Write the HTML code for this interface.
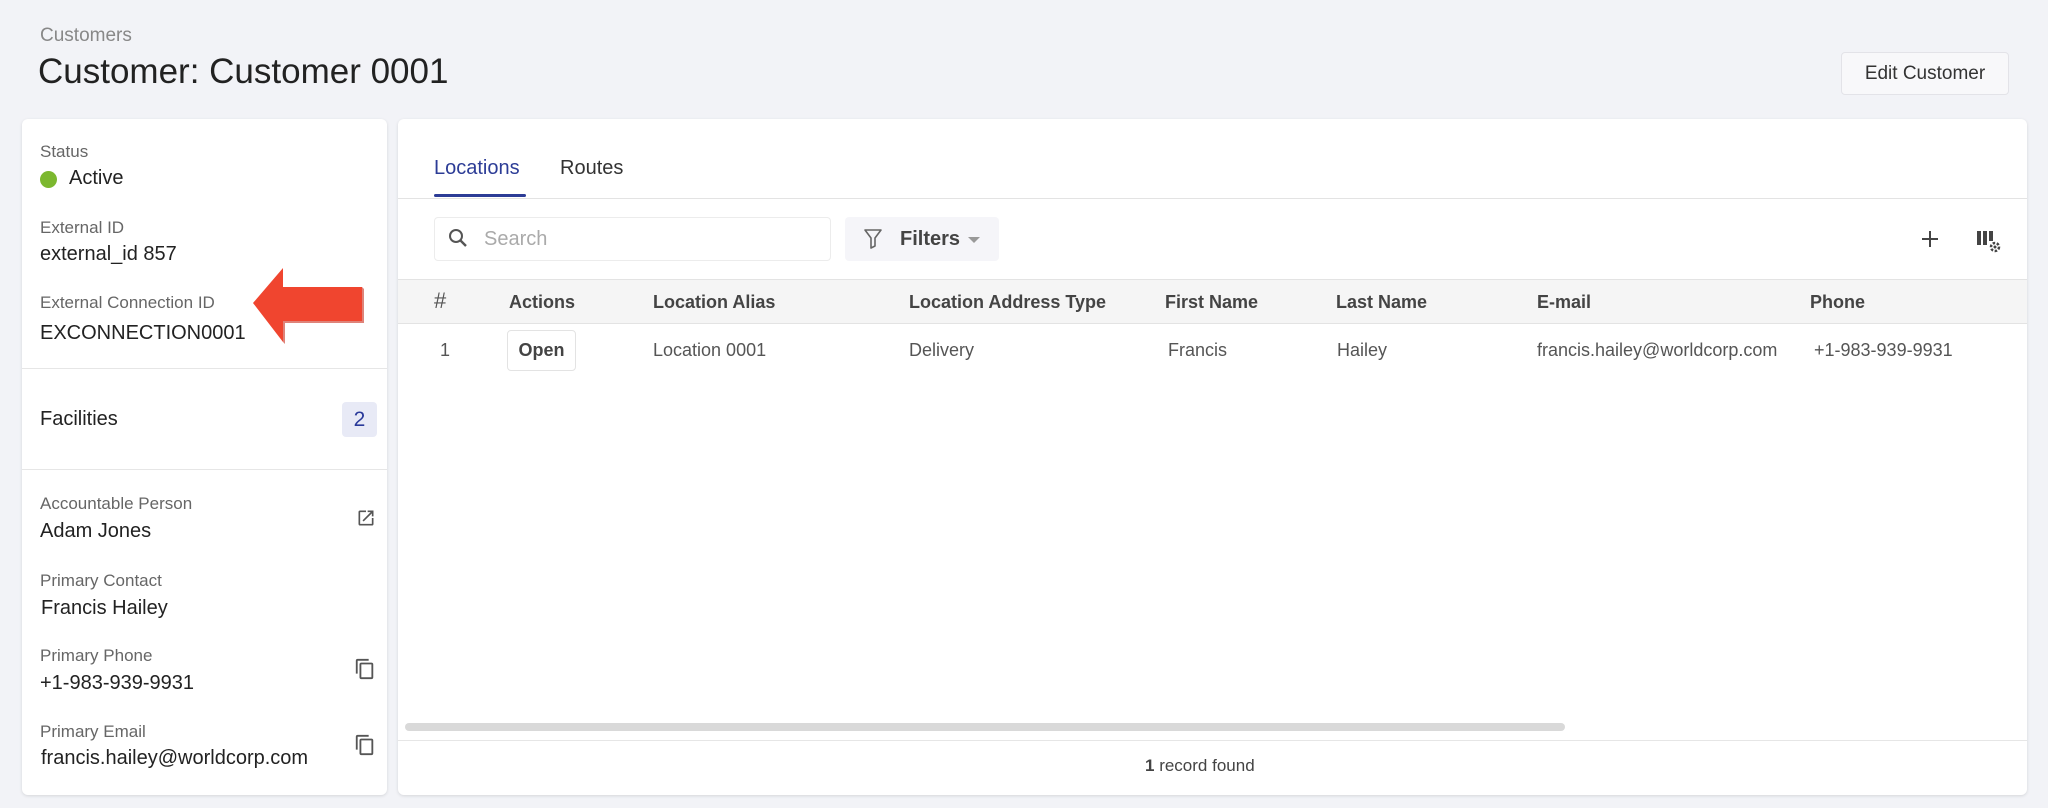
<!DOCTYPE html>
<html><head><meta charset="utf-8"><style>
*{box-sizing:border-box;margin:0;padding:0}
body{width:2048px;height:808px;background:#f2f3f7;font-family:"Liberation Sans",Arial,sans-serif;color:#222;position:relative;overflow:hidden}
.a{position:absolute;white-space:nowrap}
.card{position:absolute;background:#fff;border-radius:6px;box-shadow:0 1px 3px rgba(0,0,0,.12)}
.lbl{font-size:17px;color:#666}
.val{font-size:20px;color:#222}
.th{font-size:18px;color:#444;font-weight:bold;top:292px}
.td{font-size:18px;color:#555;top:340px}
</style></head><body>
<div class="a" style="left:40px;top:25px;font-size:19px;color:#888">Customers</div>
<div class="a" style="left:38px;top:52px;font-size:35px;color:#222">Customer: Customer 0001</div>
<div class="a" style="left:1841px;top:52px;width:168px;height:43px;background:#f8f8fa;border:1px solid #e3e3e8;border-radius:4px;font-size:19px;line-height:41px;text-align:center;color:#333">Edit Customer</div>

<div class="card" style="left:22px;top:119px;width:365px;height:676px"></div>
<div class="a lbl" style="left:40px;top:142px">Status</div>
<div class="a" style="left:40px;top:171px;width:17px;height:17px;border-radius:50%;background:#7cb82f"></div>
<div class="a val" style="left:69px;top:167px">Active</div>
<div class="a lbl" style="left:40px;top:218px">External ID</div>
<div class="a val" style="left:40px;top:243px">external_id 857</div>
<div class="a lbl" style="left:40px;top:293px">External Connection ID</div>
<div class="a val" style="left:40px;top:322px">EXCONNECTION0001</div>
<div class="a" style="left:22px;top:368px;width:365px;height:1px;background:#e6e6e6"></div>
<div class="a val" style="left:40px;top:408px">Facilities</div>
<div class="a" style="left:342px;top:402px;width:35px;height:35px;background:#e8eaf6;border-radius:4px;color:#2a3a9a;font-size:21px;line-height:35px;text-align:center">2</div>
<div class="a" style="left:22px;top:469px;width:365px;height:1px;background:#e6e6e6"></div>
<div class="a lbl" style="left:40px;top:494px">Accountable Person</div>
<div class="a val" style="left:40px;top:520px">Adam Jones</div>
<svg class="a" style="left:356px;top:508px" width="20" height="20" viewBox="0 0 24 24"><path d="M19 19H5V5h7V3H5a2 2 0 0 0-2 2v14a2 2 0 0 0 2 2h14a2 2 0 0 0 2-2v-7h-2v7zM14 3v2h3.6l-9.8 9.8 1.4 1.4L19 6.4V10h2V3h-7z" fill="#555"/></svg>
<div class="a lbl" style="left:40px;top:571px">Primary Contact</div>
<div class="a val" style="left:41px;top:597px">Francis Hailey</div>
<div class="a lbl" style="left:40px;top:646px">Primary Phone</div>
<div class="a val" style="left:40px;top:672px">+1-983-939-9931</div>
<svg class="a" style="left:354px;top:658px" width="22" height="22" viewBox="0 0 24 24"><path d="M16 1H4a2 2 0 0 0-2 2v14h2V3h12V1zm3 4H8a2 2 0 0 0-2 2v14a2 2 0 0 0 2 2h11a2 2 0 0 0 2-2V7a2 2 0 0 0-2-2zm0 16H8V7h11v14z" fill="#555"/></svg>
<div class="a lbl" style="left:40px;top:722px">Primary Email</div>
<div class="a val" style="left:41px;top:747px">francis.hailey@worldcorp.com</div>
<svg class="a" style="left:354px;top:734px" width="22" height="22" viewBox="0 0 24 24"><path d="M16 1H4a2 2 0 0 0-2 2v14h2V3h12V1zm3 4H8a2 2 0 0 0-2 2v14a2 2 0 0 0 2 2h11a2 2 0 0 0 2-2V7a2 2 0 0 0-2-2zm0 16H8V7h11v14z" fill="#555"/></svg>

<svg class="a" style="left:250px;top:266px" width="115" height="80" viewBox="0 0 115 80"><polygon points="3,37 33,2 33,21 112,21 112,55 33,55 33,76" fill="#f0452f"/><polygon points="112,21 114,23 114,57 35,57 35,78 33,76 33,55 112,55" fill="#c9301f" opacity=".6"/></svg>

<div class="card" style="left:398px;top:119px;width:1629px;height:676px"></div>
<div class="a" style="left:434px;top:157px;font-size:20px;color:#2c3c96">Locations</div>
<div class="a" style="left:434px;top:194px;width:92px;height:3px;background:#2c3c96;border-radius:2px"></div>
<div class="a" style="left:560px;top:157px;font-size:20px;color:#333">Routes</div>
<div class="a" style="left:398px;top:198px;width:1629px;height:1px;background:#e3e3e3"></div>
<div class="a" style="left:434px;top:217px;width:397px;height:44px;border:1px solid #ececec;border-radius:4px"></div>
<svg class="a" style="left:446px;top:226px" width="24" height="24" viewBox="0 0 24 24"><circle cx="10" cy="10" r="6" fill="none" stroke="#555" stroke-width="2"/><path d="M14.5 14.5l5.5 5.5" stroke="#555" stroke-width="2.4"/></svg>
<div class="a" style="left:484px;top:228px;font-size:20px;color:#aaa">Search</div>
<div class="a" style="left:845px;top:217px;width:154px;height:44px;background:#f5f5f9;border-radius:4px"></div>
<svg class="a" style="left:863px;top:228px" width="20" height="22" viewBox="0 0 20 22"><path d="M2 2h16l-6 8v8l-4 2V10z" fill="none" stroke="#666" stroke-width="1.6" stroke-linejoin="round"/></svg>
<div class="a" style="left:900px;top:228px;font-size:20px;color:#444;font-weight:bold">Filters</div>
<div class="a" style="left:968px;top:237px;border-left:6px solid transparent;border-right:6px solid transparent;border-top:6px solid #999"></div>
<svg class="a" style="left:1920px;top:229px" width="20" height="20" viewBox="0 0 20 20"><path d="M10 2v16M2 10h16" stroke="#444" stroke-width="2"/></svg>
<svg class="a" style="left:1976px;top:229px" width="26" height="26" viewBox="0 0 26 26"><rect x="1" y="2" width="4" height="14" fill="#444"/><rect x="7" y="2" width="4" height="14" fill="#444"/><rect x="13" y="2" width="4" height="10" fill="#444"/><circle cx="19" cy="18" r="4" fill="none" stroke="#444" stroke-width="2.5" stroke-dasharray="2.5 1.6"/><circle cx="19" cy="18" r="1.5" fill="#444"/></svg>

<div class="a" style="left:398px;top:279px;width:1629px;height:45px;background:#f5f5f5;border-top:1px solid #e3e3e3;border-bottom:1px solid #e3e3e3"></div>
<div class="a th" style="left:434px;font-weight:normal;font-size:22px;top:288px;color:#555">#</div>
<div class="a th" style="left:509px">Actions</div>
<div class="a th" style="left:653px">Location Alias</div>
<div class="a th" style="left:909px">Location Address Type</div>
<div class="a th" style="left:1165px">First Name</div>
<div class="a th" style="left:1336px">Last Name</div>
<div class="a th" style="left:1537px">E-mail</div>
<div class="a th" style="left:1810px">Phone</div>
<div class="a td" style="left:440px">1</div>
<div class="a" style="left:507px;top:330px;width:69px;height:41px;border:1px solid #e3e3e3;border-radius:4px;font-size:18px;font-weight:bold;color:#444;text-align:center;line-height:39px">Open</div>
<div class="a td" style="left:653px">Location 0001</div>
<div class="a td" style="left:909px">Delivery</div>
<div class="a td" style="left:1168px">Francis</div>
<div class="a td" style="left:1337px">Hailey</div>
<div class="a td" style="left:1537px">francis.hailey@worldcorp.com</div>
<div class="a td" style="left:1814px">+1-983-939-9931</div>
<div class="a" style="left:405px;top:723px;width:1160px;height:8px;background:#d9d9d9;border-radius:4px"></div>
<div class="a" style="left:398px;top:740px;width:1629px;height:1px;background:#e6e6e6"></div>
<div class="a" style="left:1145px;top:756px;font-size:17px;color:#444"><b>1</b> record found</div>
</body></html>
